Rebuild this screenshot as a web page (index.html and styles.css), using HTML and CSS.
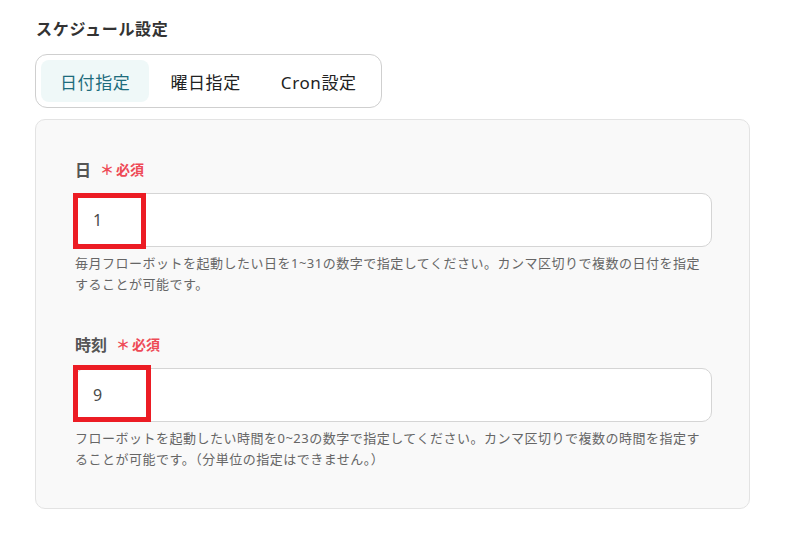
FILE: index.html
```html
<!DOCTYPE html>
<html lang="ja">
<head>
<meta charset="utf-8">
<link rel="stylesheet" href="styles.css">
</head>
<body>
<div class="page">
  <h2 class="title">スケジュール設定</h2>
  <div class="tabs">
    <div class="tab active">日付指定</div>
    <div class="tab">曜日指定</div>
    <div class="tab">Cron設定</div>
  </div>
  <div class="panel">
    <div class="field">
      <div class="label">日<span class="req"><span class="ast">＊</span>必須</span></div>
      <div class="input-wrap">
        <div class="input">1</div>
        <div class="mark mark1"></div>
      </div>
      <p class="help">毎月フローボットを起動したい日を1~31の数字で指定してください。カンマ区切りで複数の日付を指定<br>することが可能です。</p>
    </div>
    <div class="field second">
      <div class="label">時刻<span class="req"><span class="ast">＊</span>必須</span></div>
      <div class="input-wrap">
        <div class="input">9</div>
        <div class="mark mark2"></div>
      </div>
      <p class="help">フローボットを起動したい時間を0~23の数字で指定してください。カンマ区切りで複数の時間を指定す<br>ることが可能です。（分単位の指定はできません。）</p>
    </div>
  </div>
</div>
</body>
</html>
```

FILE: styles.css
```css
* { box-sizing: border-box; }
html, body { margin: 0; padding: 0; background: #ffffff; }
body {
  font-family: "Noto Sans", "Noto Sans CJK JP", sans-serif;
  color: #333;
}
.page {
  padding: 17px 0 0 35px;
  width: 750px;
}
.title {
  margin: 0 0 13px 1px;
  font-size: 16px;
  line-height: 24px;
  font-weight: 700;
  letter-spacing: 0.7px;
  color: #333;
}
.tabs {
  display: inline-flex;
  gap: 2px;
  padding: 5px;
  border: 1px solid #cfcfcf;
  border-radius: 12px;
  height: 54px;
}
.tab {
  display: flex;
  align-items: center;
  padding: 0 19px;
  height: 42px;
  border-radius: 8px;
  font-size: 17px;
  letter-spacing: 0.6px;
  color: #222;
}
.tab.active {
  background: #eff8f8;
  color: #1d6c7c;
}
.panel {
  margin-top: 11px;
  width: 715px;
  height: 390px;
  background: #f9f9f9;
  border: 1px solid #e3e3e3;
  border-radius: 10px;
  padding: 38px 37px 0 39px;
}
.field.second { margin-top: 38px; }
.label {
  font-size: 16px;
  line-height: 24px;
  font-weight: 700;
  color: #555;
  display: flex;
  align-items: center;
}
.req {
  margin-left: 9px;
  font-size: 14px;
  font-weight: 700;
  color: #ee4a56;
  display: inline-flex;
  align-items: center;
}
.ast { margin-right: 2px; }
.input-wrap {
  position: relative;
  margin-top: 11px;
}
.input {
  height: 54px;
  background: #fff;
  border: 1px solid #d5d5d5;
  border-radius: 10px;
  padding-left: 17px;
  display: flex;
  align-items: center;
  font-size: 16px;
  color: #4a4a4a;
}
.mark {
  position: absolute;
  border: 5px solid #ec1c24;
}
.mark1 { left: -2px; top: 0; width: 73px; height: 56px; }
.mark2 { left: -2px; top: -3px; width: 78px; height: 57px; }
.help {
  margin: 6px 0 0 0;
  font-size: 13px;
  line-height: 21px;
  letter-spacing: 0.5px;
  color: #666;
  white-space: nowrap;
}
```
